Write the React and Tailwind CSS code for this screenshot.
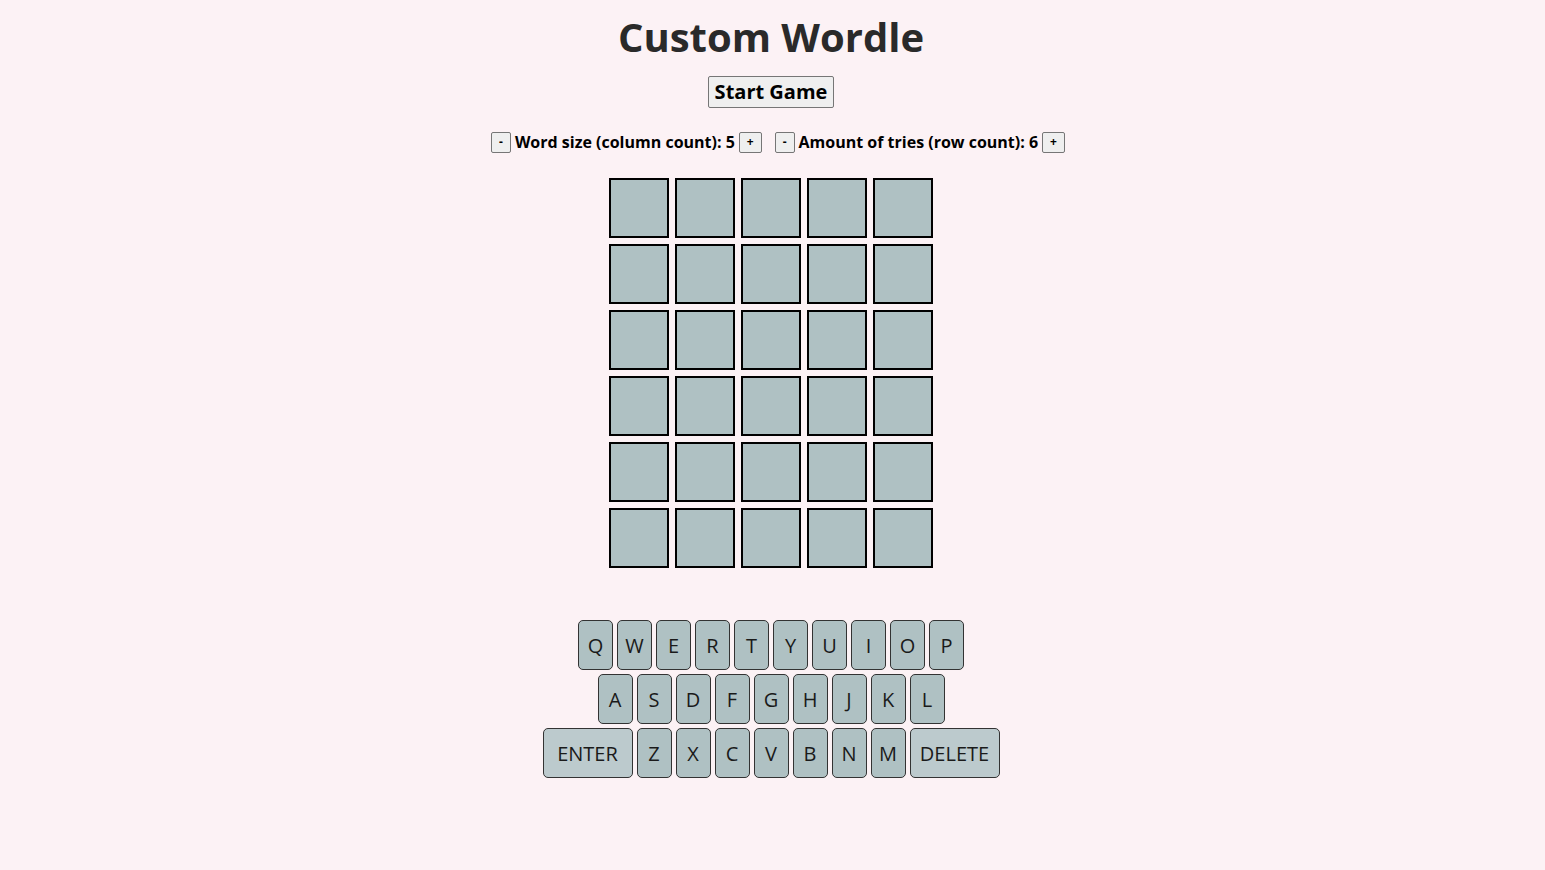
import React from 'react';

const ROW1 = ['Q', 'W', 'E', 'R', 'T', 'Y', 'U', 'I', 'O', 'P'];
const ROW2 = ['A', 'S', 'D', 'F', 'G', 'H', 'J', 'K', 'L'];
const ROW3 = ['Z', 'X', 'C', 'V', 'B', 'N', 'M'];

function SmallButton({ label }) {
  return (
    <button className="h-[21px] px-[7px] text-[12px] leading-none bg-[#efefef] border border-[#767676] rounded-[2px] text-black">
      {label}
    </button>
  );
}

function Key({ label, wide }) {
  const classes = wide
    ? 'w-[90px] bg-[#bccacd]'
    : 'w-[35px] bg-[#afc1c3]';
  return (
    <button
      className={`${classes} h-[50px] pt-[2px] border border-[#333] rounded-[5px] text-[20px] text-[#1a1a1a] flex items-center justify-center`}
    >
      {label}
    </button>
  );
}

function Board({ rows, cols }) {
  return (
    <div className="flex flex-col gap-[6px]">
      {Array.from({ length: rows }).map((_, r) => (
        <div key={r} className="flex gap-[6px]">
          {Array.from({ length: cols }).map((_, c) => (
            <div
              key={c}
              className="w-[60px] h-[60px] border-2 border-black bg-[#afc1c3]"
            />
          ))}
        </div>
      ))}
    </div>
  );
}

export default function App() {
  return (
    <div
      className="min-h-[870px] bg-[#fcf2f5] flex flex-col items-center pr-[3px] text-[#222]"
      style={{ fontFamily: '"Open Sans", "Noto Sans", sans-serif' }}
    >
      <h1 className="mt-[10px] text-[40px] font-bold leading-[54px] text-[#2a2a2a]">
        Custom Wordle
      </h1>
      <button className="mt-[12px] h-[32px] px-[6px] text-[20px] font-bold leading-none bg-[#efefef] border border-[#767676] rounded-[2px] text-black">
        Start Game
      </button>
      <div className="mt-[22px] pl-[14px] flex items-center text-[16px] font-bold text-black">
        <SmallButton label="-" />
        <span className="mx-[4px]">Word size (column count): 5</span>
        <SmallButton label="+" />
        <span className="w-[13px]" />
        <SmallButton label="-" />
        <span className="mx-[4px]">Amount of tries (row count): 6</span>
        <SmallButton label="+" />
      </div>
      <div className="mt-[24px]">
        <Board rows={6} cols={5} />
      </div>
      <div className="mt-[52px] flex flex-col items-center gap-[4px]">
        <div className="flex gap-[4px]">
          {ROW1.map((k) => (
            <Key key={k} label={k} />
          ))}
        </div>
        <div className="flex gap-[4px]">
          {ROW2.map((k) => (
            <Key key={k} label={k} />
          ))}
        </div>
        <div className="flex gap-[4px]">
          <Key label="ENTER" wide />
          {ROW3.map((k) => (
            <Key key={k} label={k} />
          ))}
          <Key label="DELETE" wide />
        </div>
      </div>
    </div>
  );
}
